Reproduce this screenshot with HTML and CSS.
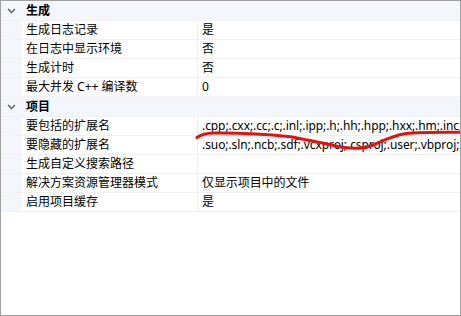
FILE: index.html
```html
<!DOCTYPE html>
<html>
<head>
<meta charset="utf-8">
<link rel="stylesheet" href="styles.css">
</head>
<body>
<div class="grid">
  <div class="cat">
    <span class="chev"><svg width="9" height="6" viewBox="0 0 9 6"><path d="M1 1 L4.5 4.5 L8 1" fill="none" stroke="#5a5a5a" stroke-width="1.4"/></svg></span>
    <span class="cat-name">生成</span>
  </div>
  <div class="row"><span class="gutter"></span><span class="name">生成日志记录</span><span class="val">是</span></div>
  <div class="row"><span class="gutter"></span><span class="name">在日志中显示环境</span><span class="val">否</span></div>
  <div class="row"><span class="gutter"></span><span class="name">生成计时</span><span class="val">否</span></div>
  <div class="row"><span class="gutter"></span><span class="name">最大并发 C++ 编译数</span><span class="val">0</span></div>
  <div class="cat">
    <span class="chev"><svg width="9" height="6" viewBox="0 0 9 6"><path d="M1 1 L4.5 4.5 L8 1" fill="none" stroke="#5a5a5a" stroke-width="1.4"/></svg></span>
    <span class="cat-name">项目</span>
  </div>
  <div class="row"><span class="gutter"></span><span class="name">要包括的扩展名</span><span class="val">.cpp;.cxx;.cc;.c;.inl;.ipp;.h;.hh;.hpp;.hxx;.hm;.inc;.xsd</span></div>
  <div class="row"><span class="gutter"></span><span class="name">要隐藏的扩展名</span><span class="val">.suo;.sln;.ncb;.sdf;.vcxproj;.csproj;.user;.vbproj;.scc</span></div>
  <div class="row"><span class="gutter"></span><span class="name">生成自定义搜索路径</span><span class="val"></span></div>
  <div class="row"><span class="gutter"></span><span class="name">解决方案资源管理器模式</span><span class="val">仅显示项目中的文件</span></div>
  <div class="row"><span class="gutter"></span><span class="name">启用项目缓存</span><span class="val">是</span></div>
  <svg class="scribble" width="461" height="316" viewBox="0 0 461 316">
    <path d="M197 137.5 C201 134.5, 206 133.2, 214 133 C235 132.8, 262 133.5, 288 136.5 C305 139, 322 143, 338 146.5 C350 148.8, 362 149.5, 373 145 C383 140.5, 393 135.5, 406 133.5 C420 132, 440 132.3, 461 132.3" fill="none" stroke="#e8100c" stroke-width="3" stroke-linecap="round"/>
  </svg>
</div>
</body>
</html>
```
FILE: styles.css
```css
html, body {
  margin: 0;
  padding: 0;
  background: #ffffff;
}
.grid {
  position: relative;
  width: 461px;
  height: 316px;
  box-sizing: border-box;
  border: 1px solid #a0a0a0;
  background: #ffffff;
  overflow: hidden;
  font-family: "Noto Sans", "Noto Sans CJK SC", sans-serif;
  font-size: 12px;
  color: #000000;
}
.cat {
  display: flex;
  align-items: center;
  height: 19px;
  line-height: 19px;
  background: #f3f6fb;
  border-bottom: 1px solid #eef1f6;
}
.chev {
  width: 25px;
  display: flex;
  justify-content: center;
  box-sizing: border-box;
  padding-right: 4px;
}
.cat-name {
  font-weight: bold;
}
.row {
  display: flex;
  height: 18px;
  border-bottom: 1px solid #f0f0f0;
  line-height: 18px;
}
.gutter {
  width: 21px;
  flex: none;
  background: #f3f6fb;
}
.name {
  width: 176px;
  flex: none;
  padding-left: 4px;
  box-sizing: border-box;
  border-right: 1px solid #f0f0f0;
  white-space: nowrap;
  overflow: hidden;
}
.val {
  flex: 1;
  padding-left: 4px;
  white-space: nowrap;
  overflow: hidden;
  letter-spacing: -0.08px;
}
.scribble {
  position: absolute;
  left: -1px;
  top: -1px;
  pointer-events: none;
}
```
